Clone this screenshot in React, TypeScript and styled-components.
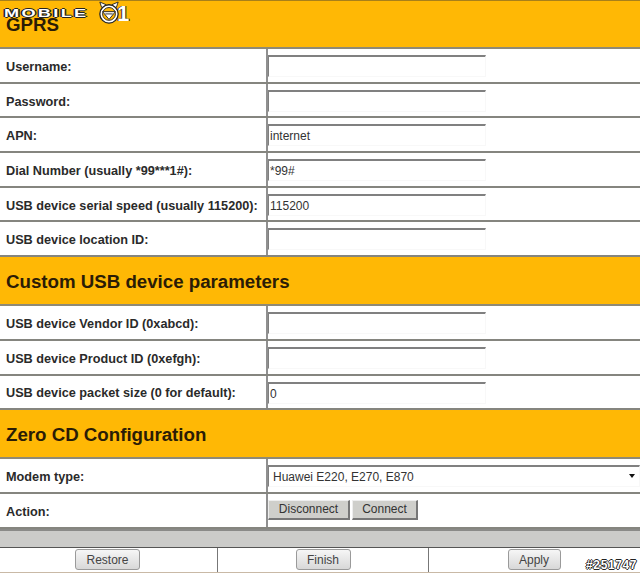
import styled, { createGlobalStyle } from "styled-components"

const GlobalStyle = createGlobalStyle`
  html, body {
    margin: 0;
    padding: 0;
    background: #fff;
    font-family: "Liberation Sans", Arial, sans-serif;
  }
`

const Page = styled.div`
  position: relative;
  box-sizing: border-box;
  width: 640px;
  height: 573px;
  overflow: hidden;
  background: #fff;
  border-top: 1px solid #a8801a;
`
const Section = styled.h2<{ $height: number }>`
  display: flex;
  align-items: center;
  box-sizing: border-box;
  height: ${(p) => p.$height}px;
  margin: 0;
  padding: 2px 6px 0;
  background: #ffb805;
  border-bottom: 2px solid #8f8a76;
  color: #2b1c06;
  font-size: 18.7px;
  font-weight: bold;
`
const Row = styled.div`
  display: grid;
  grid-template-columns: 266px 1fr;
  box-sizing: border-box;
  height: 34.7px;
  border-bottom: 2px solid #85857f;

  &:last-child {
    border-bottom: 0;
  }
`
const Label = styled.label`
  display: flex;
  align-items: center;
  padding: 3px 0 0 6px;
  color: #2a2a2a;
  font-size: 12.7px;
  font-weight: bold;
  white-space: nowrap;
`
const Cell = styled.div`
  display: flex;
  align-items: flex-start;
  min-width: 0;
  padding-top: 6px;
  border-left: 2px solid #909090;
`
const TextInput = styled.input`
  box-sizing: border-box;
  width: 218px;
  height: 22px;
  padding: 1px 0 0 1px;
  border: 1px solid #f8f8f8;
  border-top: 2px solid #808080;
  border-left: 1px solid #808080;
  border-radius: 0;
  outline: 0;
  background: #fff;
  color: #333;
  font-family: inherit;
  font-size: 12px;
`
const SelectBox = styled.div`
  position: relative;
  width: 372px;
`
const ModemSelect = styled.select`
  box-sizing: border-box;
  display: block;
  width: 100%;
  height: 22px;
  padding: 0 0 0 4px;
  border: 1px solid #f8f8f8;
  border-top: 2px solid #808080;
  border-left: 1px solid #808080;
  border-radius: 0;
  outline: 0;
  appearance: none;
  background: #fff;
  color: #333;
  font-family: inherit;
  font-size: 12px;
`
const Arrow = styled.span`
  position: absolute;
  top: 9px;
  right: 5px;
  width: 0;
  height: 0;
  border-top: 4px solid #111;
  border-left: 3.5px solid transparent;
  border-right: 3.5px solid transparent;
`
const ActionCell = styled(Cell)`
  gap: 2px;
`
const ActionButton = styled.button<{ $width: number }>`
  box-sizing: border-box;
  width: ${(p) => p.$width}px;
  height: 20px;
  padding: 0;
  border: 0;
  border-right: 2px solid #777;
  border-bottom: 2px solid #777;
  border-top: 1px solid #eee;
  border-left: 1px solid #eee;
  background: #cfcfcb;
  color: #333;
  font-family: inherit;
  font-size: 12px;
`
const GrayBar = styled.div`
  height: 16px;
  background: #cbcbc9;
  border-top: 2px solid #8a8a88;
  border-bottom: 1px solid #555;
`
const Footer = styled.div`
  display: grid;
  grid-template-columns: 217px 211px 1fr;
  height: 24px;
  border-bottom: 1px solid #c9b9a6;
`
const FooterCell = styled.div`
  display: flex;
  justify-content: center;
  align-items: center;

  & + & {
    border-left: 1px solid #777;
  }
`
const FooterButton = styled.button<{ $width: number; $shift?: number }>`
  box-sizing: border-box;
  width: ${(p) => p.$width}px;
  height: 21px;
  margin-left: ${(p) => p.$shift ?? 0}px;
  padding: 0;
  border: 1px solid #9a9a9a;
  border-radius: 3px;
  background: linear-gradient(#f6f6f6, #d8d8d8);
  color: #444;
  font-family: inherit;
  font-size: 12px;
`
const Logo = styled.div`
  position: absolute;
  top: 0;
  left: 4px;
  display: flex;
  align-items: center;
  height: 24px;
`
const LogoWord = styled.span`
  display: block;
  width: 94px;
  color: #fff;
  font-size: 11px;
  font-weight: bold;
  letter-spacing: 1.4px;
  line-height: 24px;
  transform: scaleX(1.65);
  transform-origin: left center;
  text-shadow: 1px 0 0 #222, -1px 0 0 #222, 0 1px 0 #222, 0 -1px 0 #222;
`
const LogoOne = styled.span`
  color: #fff;
  font-size: 22px;
  font-weight: bold;
  line-height: 23px;
  margin-left: -3px;
  text-shadow: 1px 0 0 #222, -1px 0 0 #222;
`
const Stamp = styled.div`
  position: absolute;
  right: 3px;
  bottom: 1px;
  color: #fff;
  font-size: 12px;
  font-weight: bold;
  letter-spacing: 0.6px;
  text-shadow: 1px 0 0 #222, -1px 0 0 #222, 0 1px 0 #222, 0 -1px 0 #222;
`

const LogoFace = () => (
  <svg width="22" height="24" viewBox="0 0 24 24">
    <path d="M4 6 L2 0 L9 3 M20 6 L22 0 L15 3" fill="#fff" stroke="#222" strokeWidth="1" />
    <circle cx="12" cy="13" r="10" fill="#fff" stroke="#222" strokeWidth="1.4" />
    <circle cx="12" cy="13" r="7" fill="#ffb805" stroke="#222" strokeWidth="1" />
    <path d="M5 10.5 L19 10.5 L12 19 Z" fill="#fff" stroke="#222" strokeWidth="1" />
    <path d="M8 13 H16" stroke="#222" strokeWidth="1" />
  </svg>
)

function Field({ label, value = "" }: { label: string; value?: string }) {
  return (
    <Row>
      <Label>{label}</Label>
      <Cell>
        <TextInput defaultValue={value} />
      </Cell>
    </Row>
  )
}

export default function App() {
  return (
    <Page>
      <GlobalStyle />
      <Section $height={48}>GPRS</Section>
      <Field label="Username:" />
      <Field label="Password:" />
      <Field label="APN:" value="internet" />
      <Field label="Dial Number (usually *99***1#):" value="*99#" />
      <Field label="USB device serial speed (usually 115200):" value="115200" />
      <Field label="USB device location ID:" />
      <Section $height={49}>Custom USB device parameters</Section>
      <Field label="USB device Vendor ID (0xabcd):" />
      <Field label="USB device Product ID (0xefgh):" />
      <Field label="USB device packet size (0 for default):" value="0" />
      <Section $height={49}>Zero CD Configuration</Section>
      <Row>
        <Label>Modem type:</Label>
        <Cell>
          <SelectBox>
            <ModemSelect defaultValue="e220">
              <option value="e220">Huawei E220, E270, E870</option>
            </ModemSelect>
            <Arrow />
          </SelectBox>
        </Cell>
      </Row>
      <Row>
        <Label>Action:</Label>
        <ActionCell>
          <ActionButton $width={82}>Disconnect</ActionButton>
          <ActionButton $width={66}>Connect</ActionButton>
        </ActionCell>
      </Row>
      <GrayBar />
      <Footer>
        <FooterCell>
          <FooterButton $width={65} $shift={-2}>Restore</FooterButton>
        </FooterCell>
        <FooterCell>
          <FooterButton $width={55}>Finish</FooterButton>
        </FooterCell>
        <FooterCell>
          <FooterButton $width={53} $shift={-1}>Apply</FooterButton>
        </FooterCell>
      </Footer>
      <Logo>
        <LogoWord>MOBILE</LogoWord>
        <LogoFace />
        <LogoOne>1</LogoOne>
      </Logo>
      <Stamp>#251747</Stamp>
    </Page>
  )
}
